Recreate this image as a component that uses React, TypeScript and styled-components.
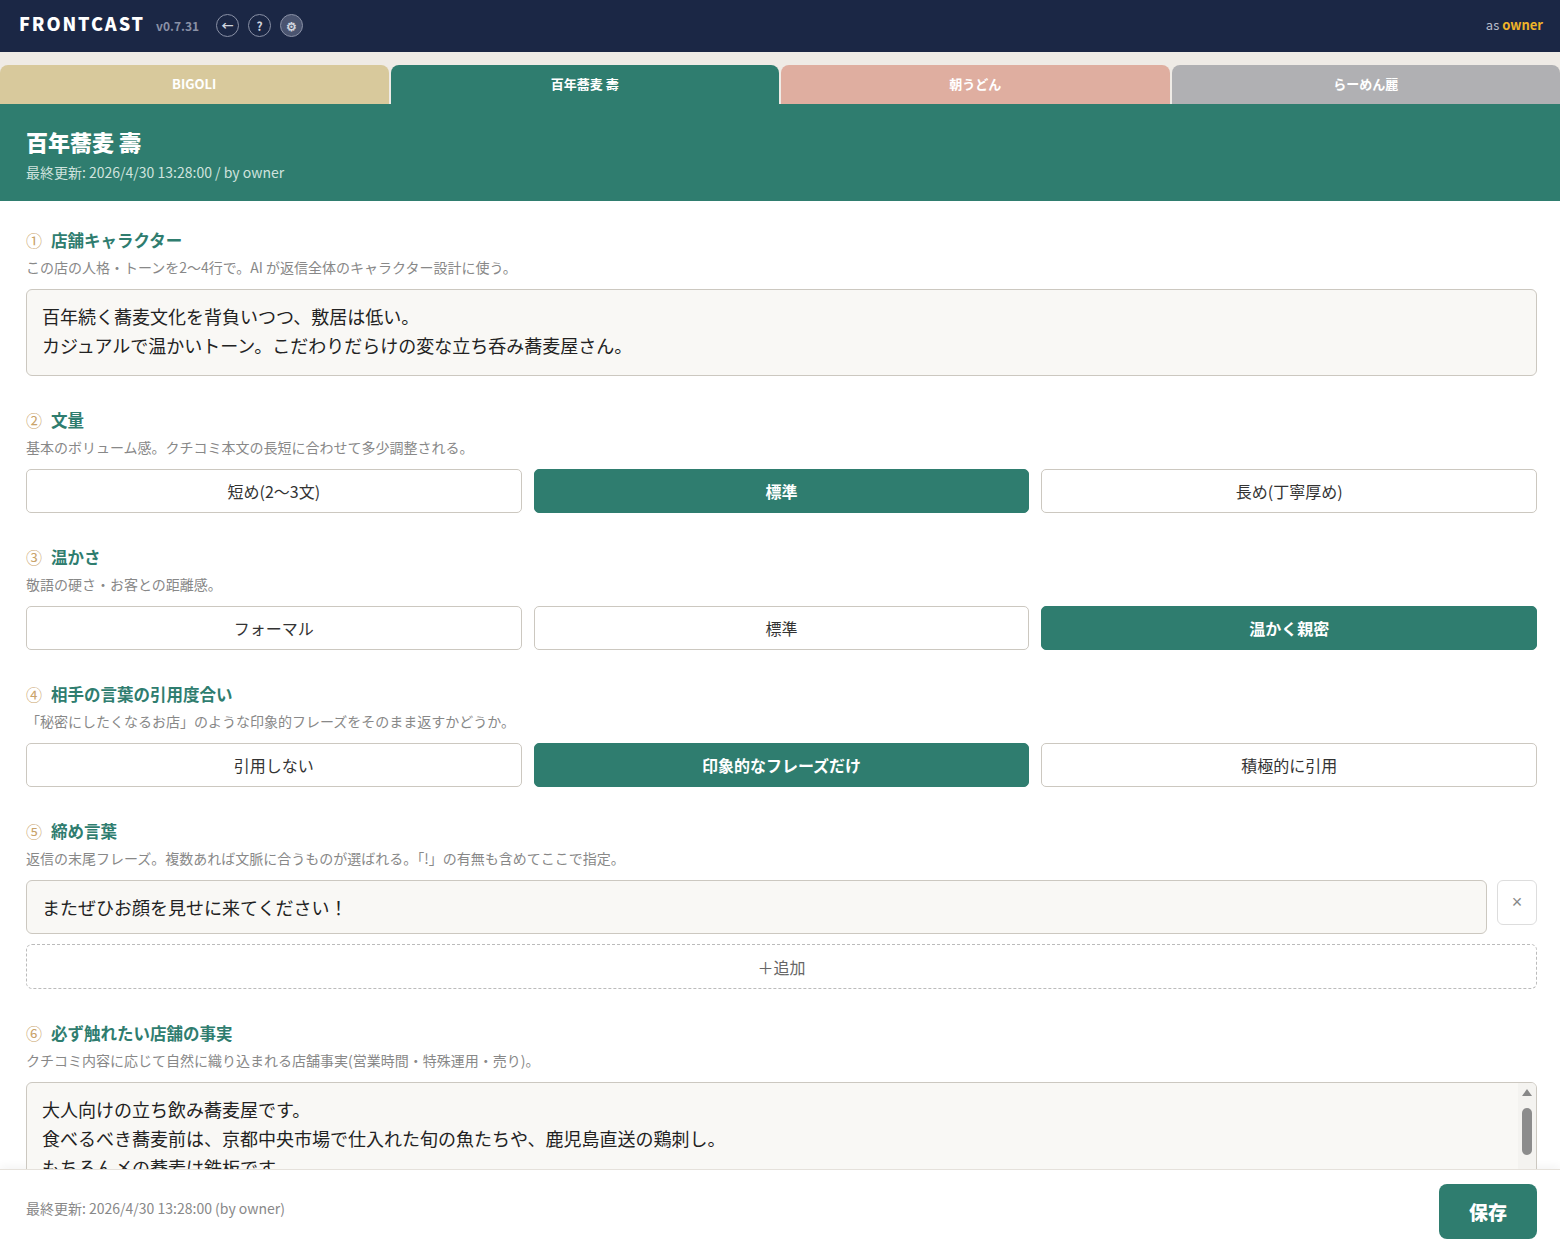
import React from 'react';
import styled, { createGlobalStyle } from 'styled-components';

const green = '#2f7d6f';
const navy = '#1b2745';

const Global = createGlobalStyle`
  html, body { margin: 0; height: 100%; }
  body { font-family: "Noto Sans CJK JP", "Noto Sans", sans-serif; background: #fff; color: #222; }
  #root { height: 100%; }
`;

const Page = styled.div`
  height: 100vh;
  display: flex;
  flex-direction: column;
`;

const TopBar = styled.header`
  height: 52px;
  flex-shrink: 0;
  background: ${navy};
  display: flex;
  align-items: center;
  padding: 0 17px 0 19px;
  gap: 9px;
`;

const Logo = styled.span`
  color: #fff;
  font-weight: 800;
  font-size: 18px;
  letter-spacing: 1.9px;
  margin-top: -6px;
`;

const Version = styled.span`
  color: #8a91a6;
  font-size: 12px;
  font-weight: 700;
  margin: -2px 8px 0 2px;
`;

const RoundBtn = styled.span<{ $filled?: boolean }>`
  width: 23px;
  height: 23px;
  border-radius: 50%;
  border: 1.5px solid #8a91a6;
  background: ${p => (p.$filled ? '#4a5470' : 'transparent')};
  color: #d0d4de;
  font-size: 12px;
  font-weight: 700;
  display: flex;
  align-items: center;
  justify-content: center;
  box-sizing: border-box;
  margin-top: -2px;
`;

const Who = styled.span`
  margin-left: auto;
  margin-top: -4px;
  color: #b8bdcc;
  font-size: 13px;
  b { color: #f0b429; }
`;

const TabRow = styled.nav`
  background: #efebe6;
  padding-top: 13px;
  display: grid;
  grid-template-columns: repeat(4, 1fr);
  gap: 2px;
  flex-shrink: 0;
`;

const Tab = styled.div<{ $bg: string }>`
  height: 39px;
  background: ${p => p.$bg};
  border-radius: 8px 8px 0 0;
  color: #fff;
  font-weight: 700;
  font-size: 13px;
  display: flex;
  align-items: center;
  justify-content: center;
  padding-bottom: 3px;
  box-sizing: border-box;
`;

const Hero = styled.div`
  background: ${green};
  color: #fff;
  padding: 22px 26px 19px;
  flex-shrink: 0;
  h1 { margin: 0; font-size: 22px; font-weight: 800; line-height: 30px; }
  p { margin: 6px 0 0; font-size: 14px; color: #cfe3de; }
`;

const Body = styled.main`
  flex: 1;
  overflow: hidden;
  padding: 26px 23px 0 26px;
`;

const Section = styled.section`
  margin-bottom: 31px;
`;

const Title = styled.h2`
  margin: 0;
  font-size: 16.5px;
  font-weight: 700;
  color: ${green};
  line-height: 26px;
  span { font-weight: 400; color: #c9a36a; margin-right: 9px; font-size: 16px; }
`;

const Desc = styled.p`
  margin: 4px 0 12px;
  font-size: 14px;
  line-height: 20px;
  color: #888;
`;

const Area = styled.div<{ $h: number }>`
  border: 1px solid #ccc8c0;
  border-radius: 6px;
  background: #f9f8f5;
  padding: 12px 15px;
  height: ${p => p.$h}px;
  box-sizing: border-box;
  font-size: 18px;
  line-height: 29px;
  position: relative;
  overflow: hidden;
`;

const Options = styled.div`
  display: grid;
  grid-template-columns: repeat(3, 1fr);
  gap: 12px;
`;

const Opt = styled.button<{ $on?: boolean }>`
  height: 44px;
  border-radius: 5px;
  border: 1px solid ${p => (p.$on ? green : '#ccc8c0')};
  background: ${p => (p.$on ? green : '#fff')};
  color: ${p => (p.$on ? '#fff' : '#333')};
  font-weight: ${p => (p.$on ? 700 : 400)};
  font-family: inherit;
  font-size: 16px;
`;

const PhraseRow = styled.div`
  display: flex;
  gap: 10px;
  margin-bottom: 10px;
`;

const Phrase = styled.div`
  flex: 1;
  height: 54px;
  box-sizing: border-box;
  border: 1px solid #ccc8c0;
  border-radius: 6px;
  background: #f9f8f5;
  padding: 0 15px;
  display: flex;
  align-items: center;
  font-size: 18px;
`;

const XBtn = styled.button`
  width: 40px;
  height: 45px;
  border: 1px solid #ddd;
  border-radius: 6px;
  background: #fff;
  color: #888;
  font-size: 18px;
`;

const AddBtn = styled.button`
  width: 100%;
  height: 45px;
  border: 1px dashed #bbb;
  border-radius: 6px;
  background: #fff;
  color: #666;
  font-family: inherit;
  font-size: 16px;
`;

const Scroll = styled.div`
  position: absolute;
  right: 0;
  top: 0;
  bottom: 0;
  width: 18px;
  background: #f4f3f0;
  &::before {
    content: '';
    position: absolute;
    left: 4px;
    top: 6px;
    border: 5px solid transparent;
    border-bottom: 7px solid #888;
    border-top: 0;
  }
  &::after {
    content: '';
    position: absolute;
    left: 4px;
    top: 25px;
    width: 10px;
    height: 47px;
    border-radius: 5px;
    background: #8c8c8c;
  }
`;

const Footer = styled.footer`
  height: 75px;
  flex-shrink: 0;
  border-top: 1px solid #e5e1db;
  box-shadow: 0 -4px 8px rgba(0,0,0,0.04);
  display: flex;
  align-items: center;
  justify-content: space-between;
  padding: 0 23px 0 26px;
  font-size: 14px;
  color: #888;
`;

const Save = styled.button`
  width: 98px;
  height: 55px;
  border: none;
  border-radius: 8px;
  background: ${green};
  color: #fff;
  font-family: inherit;
  font-size: 19px;
  font-weight: 800;
  margin-top: 8px;
`;

const groups = [
  { n: '②', t: '文量', d: '基本のボリューム感。クチコミ本文の長短に合わせて多少調整される。', o: ['短め(2〜3文)', '標準', '長め(丁寧厚め)'], on: 1 },
  { n: '③', t: '温かさ', d: '敬語の硬さ・お客との距離感。', o: ['フォーマル', '標準', '温かく親密'], on: 2 },
  { n: '④', t: '相手の言葉の引用度合い', d: '「秘密にしたくなるお店」のような印象的フレーズをそのまま返すかどうか。', o: ['引用しない', '印象的なフレーズだけ', '積極的に引用'], on: 1 },
];

export default function App() {
  return (
    <Page>
      <Global />
      <TopBar>
        <Logo>FRONTCAST</Logo>
        <Version>v0.7.31</Version>
        <RoundBtn>←</RoundBtn>
        <RoundBtn>?</RoundBtn>
        <RoundBtn $filled>⚙</RoundBtn>
        <Who>as <b>owner</b></Who>
      </TopBar>
      <TabRow>
        <Tab $bg="#d8c99c">BIGOLI</Tab>
        <Tab $bg={green}>百年蕎麦 壽</Tab>
        <Tab $bg="#dfaea0">朝うどん</Tab>
        <Tab $bg="#b0b0b3">らーめん麗</Tab>
      </TabRow>
      <Hero>
        <h1>百年蕎麦 壽</h1>
        <p>最終更新: 2026/4/30 13:28:00 / by owner</p>
      </Hero>
      <Body>
        <Section>
          <Title><span>①</span>店舗キャラクター</Title>
          <Desc>この店の人格・トーンを2〜4行で。AI が返信全体のキャラクター設計に使う。</Desc>
          <Area $h={87}>
            百年続く蕎麦文化を背負いつつ、敷居は低い。<br />
            カジュアルで温かいトーン。こだわりだらけの変な立ち呑み蕎麦屋さん。
          </Area>
        </Section>
        {groups.map(g => (
          <Section key={g.n}>
            <Title><span>{g.n}</span>{g.t}</Title>
            <Desc>{g.d}</Desc>
            <Options>
              {g.o.map((o, i) => <Opt key={o} $on={i === g.on}>{o}</Opt>)}
            </Options>
          </Section>
        ))}
        <Section>
          <Title><span>⑤</span>締め言葉</Title>
          <Desc>返信の末尾フレーズ。複数あれば文脈に合うものが選ばれる。「!」の有無も含めてここで指定。</Desc>
          <PhraseRow>
            <Phrase>またぜひお顔を見せに来てください！</Phrase>
            <XBtn>×</XBtn>
          </PhraseRow>
          <AddBtn>＋追加</AddBtn>
        </Section>
        <Section>
          <Title><span>⑥</span>必ず触れたい店舗の事実</Title>
          <Desc>クチコミ内容に応じて自然に織り込まれる店舗事実(営業時間・特殊運用・売り)。</Desc>
          <Area $h={160}>
            大人向けの立ち飲み蕎麦屋です。<br />
            食べるべき蕎麦前は、京都中央市場で仕入れた旬の魚たちや、鹿児島直送の鶏刺し。<br />
            もちろん〆の蕎麦は鉄板です。
            <Scroll />
          </Area>
        </Section>
      </Body>
      <Footer>
        <span>最終更新: 2026/4/30 13:28:00 (by owner)</span>
        <Save>保存</Save>
      </Footer>
    </Page>
  );
}
